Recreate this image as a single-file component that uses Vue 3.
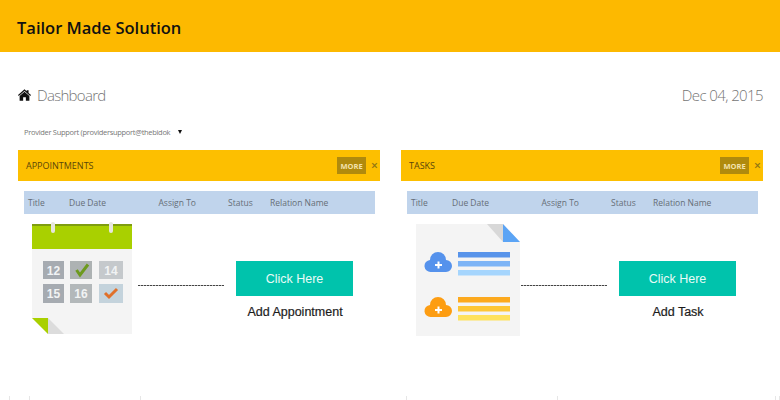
<script setup>
const columns = [
  { label: 'Title', width: 41 },
  { label: 'Due Date', width: 89.5 },
  { label: 'Assign To', width: 69.5 },
  { label: 'Status', width: 42 },
  { label: 'Relation Name', width: 90 }
]
const ticks = [10, 20, 111, 266, 151, 218, 4]
</script>

<template>
  <div class="page">
    <header class="topbar">Tailor Made Solution</header>
    <main class="content">
      <div class="heading">
        <div class="crumb">
          <svg class="home" viewBox="0 0 24 21" aria-hidden="true">
            <path d="M12 0 L16 3.6 V1.5 H19.5 V6.7 L24 10.7 L22.6 12.2 L12 2.9 L1.4 12.2 L0 10.7 Z" fill="#111" />
            <path d="M12 4.4 L21 12.2 V21 H14.5 V14.500 H9.5 V21 H3 V12.2 Z" fill="#111" />
          </svg>
          <span>Dashboard</span>
        </div>
        <div class="date">Dec 04, 2015</div>
      </div>
      <div class="select"><span>Provider Support (providersupport@thebidok</span><i class="caret"></i></div>
      <div class="panels">
        <section class="panel">
          <div class="panel-bar">
            <span>APPOINTMENTS</span>
            <b class="more">MORE</b>
            <span class="close">×</span>
          </div>
          <div class="thead">
            <span v-for="c in columns" :key="c.label" :style="{ width: c.width + 'px' }">{{ c.label }}</span>
          </div>
          <div class="panel-body">
            <svg class="art calendar" viewBox="0 0 102 111" aria-hidden="true">
              <path d="M1 0 H101 V110 H17 L1 94 Z" fill="#f4f4f4" />
              <rect x="1" y="0" width="100" height="25" fill="#a9d000" />
              <rect x="1" y="0" width="100" height="2" fill="#7f9d10" />
              <rect x="20" y="-2" width="4" height="11" rx="2" fill="#e6e6de" />
              <rect x="78" y="-2" width="4" height="11" rx="2" fill="#e6e6de" />
              <rect x="12" y="37" width="21" height="18" fill="#a6abb1" />
              <rect x="39" y="37" width="22" height="18" fill="#adb2b3" />
              <rect x="68" y="37" width="24" height="18" fill="#c5c9cc" />
              <rect x="12" y="60" width="21" height="19" fill="#a6abb1" />
              <rect x="39" y="60" width="22" height="19" fill="#b3b8ba" />
              <rect x="68" y="60" width="24" height="19" fill="#c4d3dc" />
              <text x="22.500" y="50.500" class="num">12</text>
              <text x="80" y="50.500" class="num">14</text>
              <text x="22.500" y="74" class="num">15</text>
              <text x="50" y="74" class="num">16</text>
              <path d="M45.500 46 L49 51 L57 40.500" fill="none" stroke="#6d9a1e" stroke-width="3" />
              <path d="M74 69 L78 73 L86 65" fill="none" stroke="#e0702a" stroke-width="3" />
              <path d="M17 94 L33 110 H17 Z" fill="#dcdcdc" />
              <path d="M1 94 H17 V110 Z" fill="#a9d000" />
            </svg>
            <div class="dashes"></div>
            <div class="action">
              <a class="cta">Click Here</a>
              <div class="caption">Add Appointment</div>
            </div>
          </div>
        </section>
        <section class="panel">
          <div class="panel-bar">
            <span>TASKS</span>
            <b class="more">MORE</b>
            <span class="close">×</span>
          </div>
          <div class="thead">
            <span v-for="c in columns" :key="c.label" :style="{ width: c.width + 'px' }">{{ c.label }}</span>
          </div>
          <div class="panel-body task-body">
            <svg class="art doc" viewBox="0 0 105 113" aria-hidden="true">
              <path d="M0 0 H87 L104 18 V112 H0 Z" fill="#f4f4f4" />
              <path d="M71 0 H87 V18 Z" fill="#d8d8d8" />
              <path d="M87 0 L104 18 H87 Z" fill="#5ba4f5" />
              <path d="M15 48 A6 6 0 0 1 14 36 A8 8 0 0 1 30 36 A6 6 0 0 1 30 48 Z" fill="#5592ec" />
              <path d="M22.500 37.500 V44.500 M19 41 H26" stroke="#fff" stroke-width="2" />
              <rect x="42" y="28" width="52" height="5.500" fill="#5793ea" />
              <rect x="42" y="37" width="52" height="5.500" fill="#7db4f6" />
              <rect x="42" y="46" width="52" height="5.500" fill="#a5d5fd" />
              <path d="M15 93 A6 6 0 0 1 14 81 A8 8 0 0 1 30 81 A6 6 0 0 1 30 93 Z" fill="#fd9d12" />
              <path d="M22.500 82.500 V89.500 M19 86 H26" stroke="#fff" stroke-width="2" />
              <rect x="42" y="73" width="52" height="5.500" fill="#fca91e" />
              <rect x="42" y="82" width="52" height="5.500" fill="#fdc636" />
              <rect x="42" y="91" width="52" height="5.500" fill="#fee25c" />
            </svg>
            <div class="dashes"></div>
            <div class="action">
              <a class="cta">Click Here</a>
              <div class="caption">Add Task</div>
            </div>
          </div>
        </section>
      </div>
    </main>
    <div class="ticks">
      <span v-for="(w, i) in ticks" :key="i" :style="{ width: w + 'px' }"></span>
    </div>
  </div>
</template>

<style>
html, body { margin: 0; background: #fff; }
</style>

<style scoped>
.page {
  display: flex;
  flex-direction: column;
  width: 780px;
  height: 400px;
  overflow: hidden;
  background: #fff;
  font-family: "Open Sans", "Liberation Sans", sans-serif;
}
.topbar {
  height: 52px;
  box-sizing: border-box;
  padding: 17px 0 0 17px;
  background: #fdb900;
  color: #111;
  font-size: 16.500px;
  line-height: 22px;
  font-weight: 600;
}
.content {
  flex: 1;
  padding: 31px 17px 0 18px;
}
.heading {
  display: flex;
  justify-content: space-between;
  align-items: center;
  height: 24px;
}
.crumb {
  display: flex;
  align-items: center;
  gap: 6px;
  color: #757575;
  font-size: 15px;
  letter-spacing: -0.7px;
  font-weight: 300;
}
.home { width: 13px; height: 12px; }
.date {
  color: #757575;
  font-size: 15px;
  letter-spacing: -0.6px;
  font-weight: 300;
}
.select {
  display: flex;
  align-items: center;
  height: 16px;
  margin-top: 17px;
  padding-left: 6px;
  color: #777;
  font-size: 7.500px;
  letter-spacing: -0.3px;
}
.select span { white-space: nowrap; }
.caret {
  width: 0;
  height: 0;
  margin-left: 8px;
  border-left: 2px solid transparent;
  border-right: 2px solid transparent;
  border-top: 4px solid #111;
}
.panels {
  display: grid;
  grid-template-columns: 362px 362px;
  gap: 21px;
  margin-top: 10px;
}
.panel-bar {
  display: flex;
  align-items: center;
  height: 31px;
  padding: 0 1px 0 8px;
  background: #fdbf00;
  color: #5a460a;
  font-size: 9px;
}
.panel-bar > span:first-child { flex: 1; }
.more {
  display: flex;
  align-items: center;
  justify-content: center;
  width: 29px;
  height: 17px;
  background: #b08a0d;
  color: #f3e2ac;
  font-size: 7.500px;
  font-weight: 700;
}
.close {
  margin-left: 4px;
  width: 9px;
  color: #8f7414;
  font-size: 12px;
  font-weight: 600;
  text-align: center;
}
.thead {
  display: flex;
  align-items: center;
  width: 351px;
  height: 23px;
  margin: 10px 0 0 6px;
  padding-left: 4px;
  box-sizing: border-box;
  background: #c0d4ec;
  color: #666e77;
  font-size: 8.500px;
}
.thead span { flex: none; }
.panel-body {
  display: flex;
  align-items: flex-start;
  padding: 10px 0 0 13px;
}
.art { flex: none; display: block; overflow: visible; }
.calendar { width: 102px; height: 111px; }
.doc { width: 105px; height: 113px; margin-left: 2px; }
.dashes {
  flex: none;
  width: 86px;
  height: 1px;
  margin: 61px 0 0 5px;
  background: repeating-linear-gradient(90deg, #444 0 2px, #bbb 2px 3px);
}
.task-body .dashes { margin-left: 0; }
.action {
  width: 117px;
  margin: 37px 0 0 12px;
  text-align: center;
}
.cta {
  display: flex;
  align-items: center;
  justify-content: center;
  height: 35px;
  background: #00c3ac;
  color: #e8fbf7;
  font-family: "Liberation Sans", sans-serif;
  font-size: 12.500px;
}
.caption {
  margin-top: 8px;
  padding-left: 1px;
  color: #1c1c1c;
  font-family: "Liberation Sans", sans-serif;
  font-size: 12.500px;
  line-height: 16px;
  -webkit-text-stroke: 0.2px #1c1c1c;
}
.num {
  fill: #f1f3f4;
  font-family: "Liberation Sans", sans-serif;
  font-size: 12px;
  font-weight: 700;
  text-anchor: middle;
}
.ticks {
  display: flex;
  flex: none;
  height: 4px;
}
.ticks span {
  flex: none;
  box-sizing: border-box;
  border-right: 1px solid #e6e6e6;
}
</style>
